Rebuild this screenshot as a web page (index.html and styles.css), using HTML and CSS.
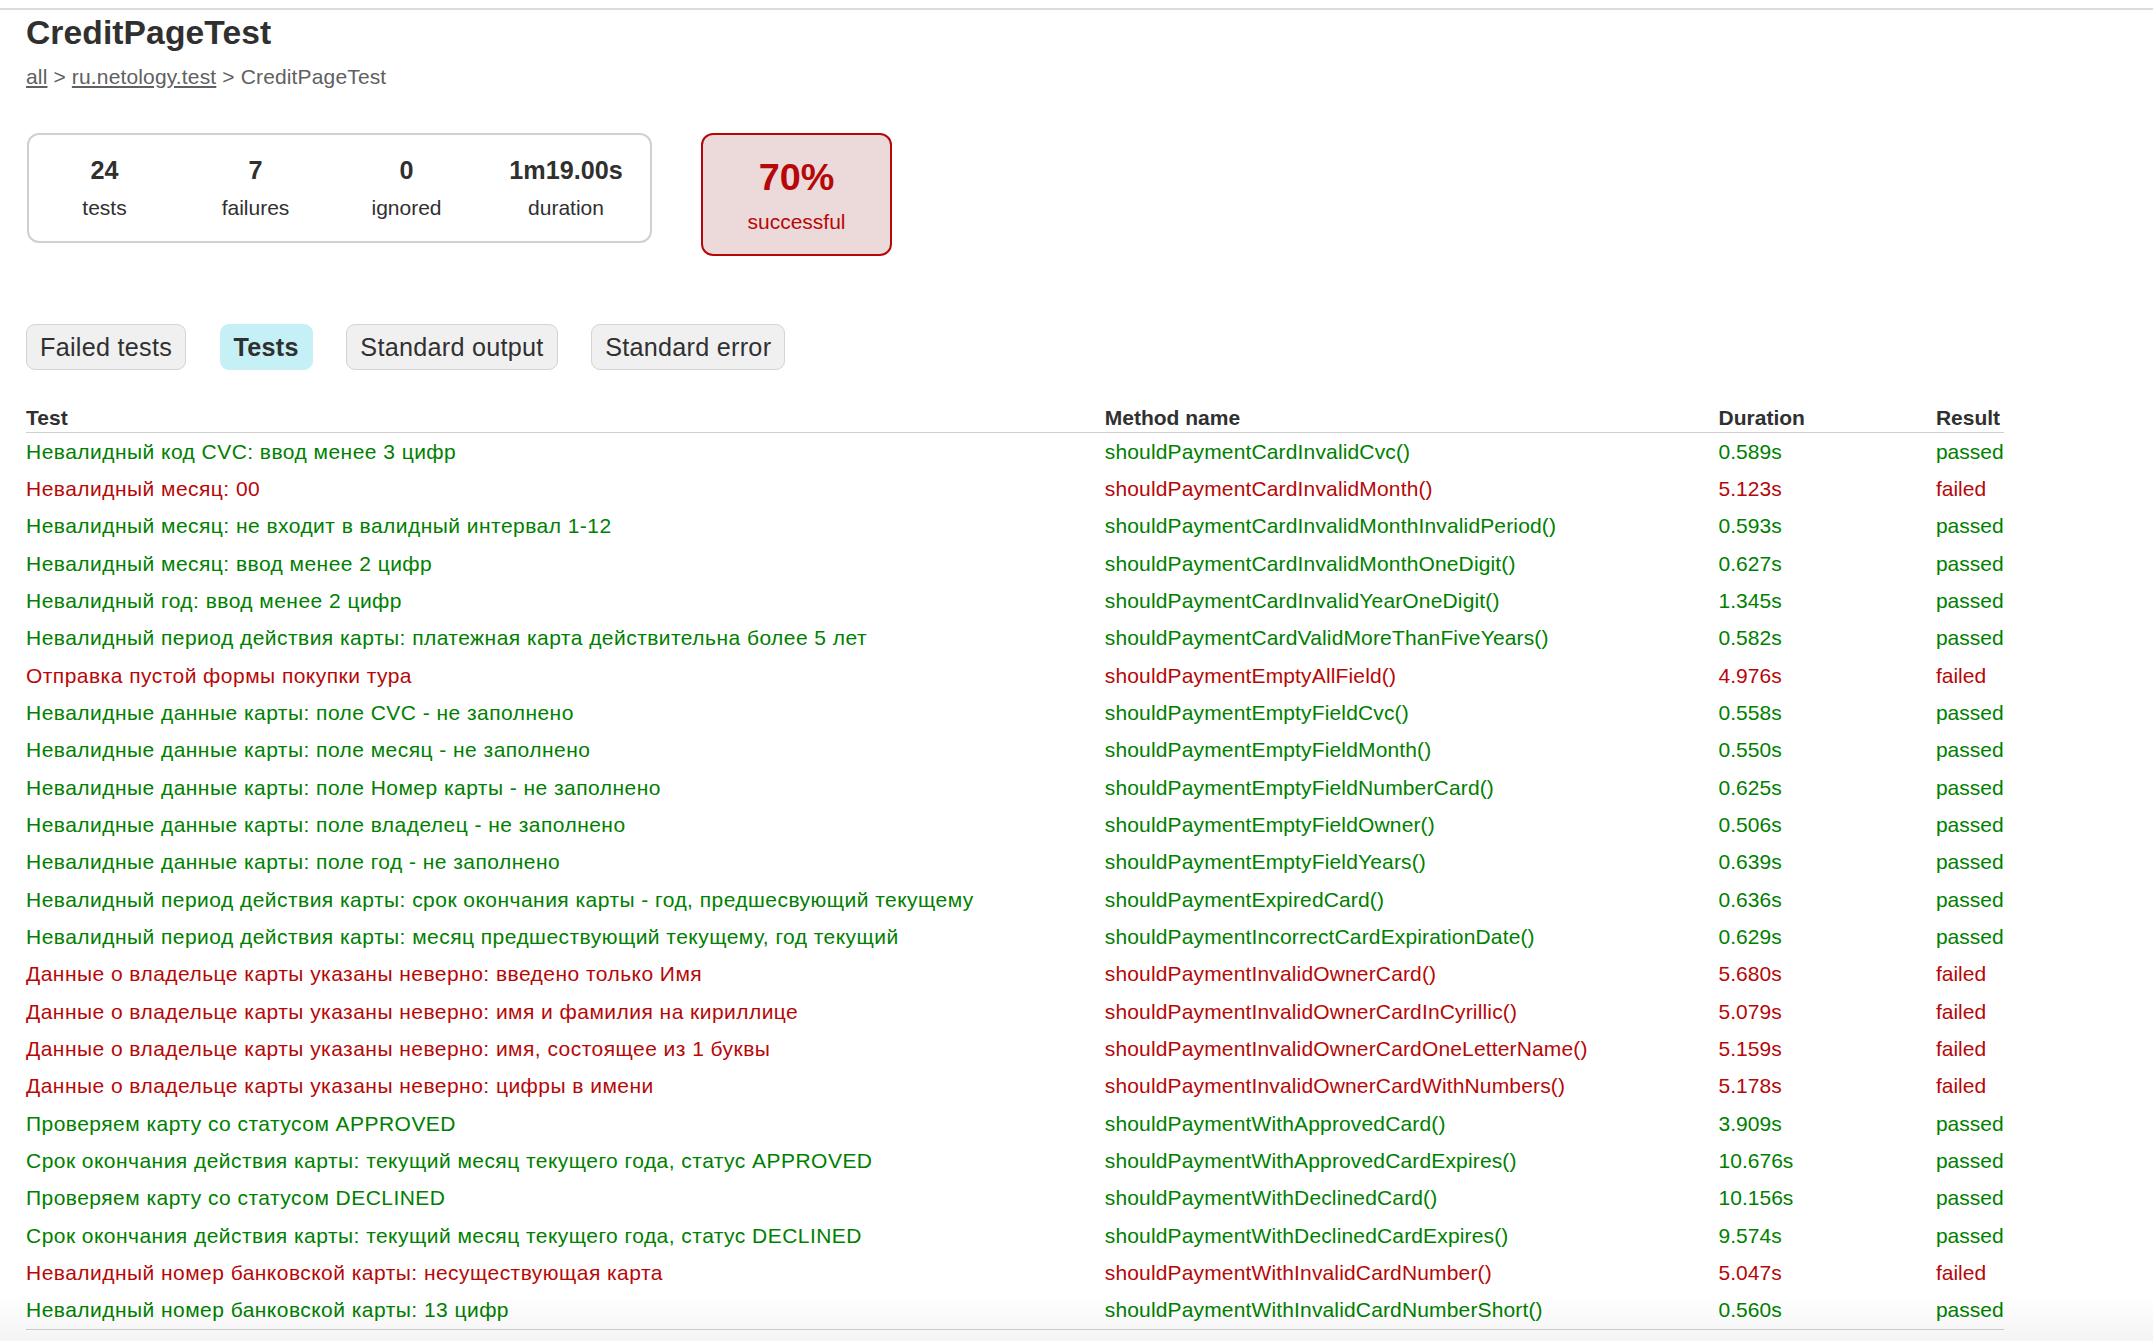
FILE: index.html
```html
<!DOCTYPE html>
<html lang="ru">
<head>
<meta charset="utf-8">
<title>Test results - CreditPageTest</title>
<link rel="stylesheet" href="styles.css">
</head>
<body>
<div class="topline"></div>
<div class="content">
  <h1 class="title">CreditPageTest</h1>
  <div class="breadcrumbs"><a href="#">all</a> &gt; <a href="#">ru.netology.test</a> &gt; CreditPageTest</div>

  <div class="summary">
    <div class="summary-group">
      <div class="info-box"><div class="counter">24</div><p>tests</p></div>
      <div class="info-box"><div class="counter">7</div><p>failures</p></div>
      <div class="info-box"><div class="counter">0</div><p>ignored</p></div>
      <div class="info-box info-duration"><div class="counter">1m19.00s</div><p>duration</p></div>
    </div>
    <div class="info-box success-rate failures">
      <div class="percent">70%</div>
      <p>successful</p>
    </div>
  </div>

  <ul class="tab-links">
    <li><a href="#">Failed tests</a></li>
    <li class="selected"><a href="#">Tests</a></li>
    <li><a href="#">Standard output</a></li>
    <li><a href="#">Standard error</a></li>
  </ul>

  <div class="tab">
    <table class="results">
      <thead>
        <tr><th>Test</th><th>Method name</th><th>Duration</th><th>Result</th></tr>
      </thead>
      <tbody>
        <tr class="ok"><td>Невалидный код CVC: ввод менее 3 цифр</td><td>shouldPaymentCardInvalidCvc()</td><td>0.589s</td><td>passed</td></tr>
        <tr class="bad"><td>Невалидный месяц: 00</td><td>shouldPaymentCardInvalidMonth()</td><td>5.123s</td><td>failed</td></tr>
        <tr class="ok"><td>Невалидный месяц: не входит в валидный интервал 1-12</td><td>shouldPaymentCardInvalidMonthInvalidPeriod()</td><td>0.593s</td><td>passed</td></tr>
        <tr class="ok"><td>Невалидный месяц: ввод менее 2 цифр</td><td>shouldPaymentCardInvalidMonthOneDigit()</td><td>0.627s</td><td>passed</td></tr>
        <tr class="ok"><td>Невалидный год: ввод менее 2 цифр</td><td>shouldPaymentCardInvalidYearOneDigit()</td><td>1.345s</td><td>passed</td></tr>
        <tr class="ok"><td>Невалидный период действия карты: платежная карта действительна более 5 лет</td><td>shouldPaymentCardValidMoreThanFiveYears()</td><td>0.582s</td><td>passed</td></tr>
        <tr class="bad"><td>Отправка пустой формы покупки тура</td><td>shouldPaymentEmptyAllField()</td><td>4.976s</td><td>failed</td></tr>
        <tr class="ok"><td>Невалидные данные карты: поле CVC - не заполнено</td><td>shouldPaymentEmptyFieldCvc()</td><td>0.558s</td><td>passed</td></tr>
        <tr class="ok"><td>Невалидные данные карты: поле месяц - не заполнено</td><td>shouldPaymentEmptyFieldMonth()</td><td>0.550s</td><td>passed</td></tr>
        <tr class="ok"><td>Невалидные данные карты: поле Номер карты - не заполнено</td><td>shouldPaymentEmptyFieldNumberCard()</td><td>0.625s</td><td>passed</td></tr>
        <tr class="ok"><td>Невалидные данные карты: поле владелец - не заполнено</td><td>shouldPaymentEmptyFieldOwner()</td><td>0.506s</td><td>passed</td></tr>
        <tr class="ok"><td>Невалидные данные карты: поле год - не заполнено</td><td>shouldPaymentEmptyFieldYears()</td><td>0.639s</td><td>passed</td></tr>
        <tr class="ok"><td>Невалидный период действия карты: срок окончания карты - год, предшесвующий текущему</td><td>shouldPaymentExpiredCard()</td><td>0.636s</td><td>passed</td></tr>
        <tr class="ok"><td>Невалидный период действия карты: месяц предшествующий текущему, год текущий</td><td>shouldPaymentIncorrectCardExpirationDate()</td><td>0.629s</td><td>passed</td></tr>
        <tr class="bad"><td>Данные о владельце карты указаны неверно: введено только Имя</td><td>shouldPaymentInvalidOwnerCard()</td><td>5.680s</td><td>failed</td></tr>
        <tr class="bad"><td>Данные о владельце карты указаны неверно: имя и фамилия на кириллице</td><td>shouldPaymentInvalidOwnerCardInCyrillic()</td><td>5.079s</td><td>failed</td></tr>
        <tr class="bad"><td>Данные о владельце карты указаны неверно: имя, состоящее из 1 буквы</td><td>shouldPaymentInvalidOwnerCardOneLetterName()</td><td>5.159s</td><td>failed</td></tr>
        <tr class="bad"><td>Данные о владельце карты указаны неверно: цифры в имени</td><td>shouldPaymentInvalidOwnerCardWithNumbers()</td><td>5.178s</td><td>failed</td></tr>
        <tr class="ok"><td>Проверяем карту со статусом APPROVED</td><td>shouldPaymentWithApprovedCard()</td><td>3.909s</td><td>passed</td></tr>
        <tr class="ok"><td>Срок окончания действия карты: текущий месяц текущего года, статус APPROVED</td><td>shouldPaymentWithApprovedCardExpires()</td><td>10.676s</td><td>passed</td></tr>
        <tr class="ok"><td>Проверяем карту со статусом DECLINED</td><td>shouldPaymentWithDeclinedCard()</td><td>10.156s</td><td>passed</td></tr>
        <tr class="ok"><td>Срок окончания действия карты: текущий месяц текущего года, статус DECLINED</td><td>shouldPaymentWithDeclinedCardExpires()</td><td>9.574s</td><td>passed</td></tr>
        <tr class="bad"><td>Невалидный номер банковской карты: несуществующая карта</td><td>shouldPaymentWithInvalidCardNumber()</td><td>5.047s</td><td>failed</td></tr>
        <tr class="ok"><td>Невалидный номер банковской карты: 13 цифр</td><td>shouldPaymentWithInvalidCardNumberShort()</td><td>0.560s</td><td>passed</td></tr>
      </tbody>
    </table>
  </div>
</div>
<div class="bottom-fade"></div>
</body>
</html>
```

FILE: styles.css
```css
html, body {
  margin: 0;
  padding: 0;
  background: #ffffff;
}

body {
  font-family: "Liberation Sans", Arial, Helvetica, sans-serif;
  font-size: 21px;
  color: #303030;
}

.topline {
  height: 2px;
  margin-top: 8px;
  background: #dcdcdc;
}

.content {
  padding-left: 26px;
}

.title {
  margin: 4px 0 13px;
  font-size: 33.6px;
  line-height: 38px;
  font-weight: bold;
  color: #303030;
  white-space: nowrap;
  letter-spacing: 0.1px;
}

.breadcrumbs {
  line-height: 24px;
  color: #606060;
  letter-spacing: 0.15px;
}

.breadcrumbs a {
  color: #606060;
  text-decoration: underline;
}

.summary {
  display: flex;
  align-items: flex-start;
  margin-top: 44px;
}

.summary-group {
  display: flex;
  border: 2px solid #d0d0d0;
  border-radius: 12px;
  margin-left: 1px;
}

.info-box {
  width: 151px;
  padding-top: 21px;
  padding-bottom: 21.5px;
  text-align: center;
}

.info-box p {
  margin: 0;
  line-height: 24px;
}

.info-duration {
  width: 168px;
}

.counter {
  font-size: 25.2px;
  line-height: 29px;
  font-weight: bold;
  margin-bottom: 10.5px;
}

.success-rate {
  width: 187px;
  margin-left: 49px;
  padding-top: 20px;
  padding-bottom: 20.5px;
  border: 2px solid #d0d0d0;
  border-radius: 12px;
}

.success-rate.failures {
  background: #ecdada;
  border-color: #b60808;
  color: #b60808;
}

.percent {
  font-size: 37.8px;
  line-height: 44px;
  font-weight: bold;
  margin-bottom: 10.5px;
}

.tab-links {
  display: flex;
  list-style: none;
  margin: 68px 0 0;
  padding: 0;
}

.tab-links li {
  padding: 7px 13px;
  margin-right: 33.5px;
  border: 1px solid #d4d4d4;
  border-radius: 9px;
  background: #f0f0f0;
}

.tab-links li.selected {
  background: #c5f0f5;
  border-color: #c5f0f5;
}

.tab-links a {
  display: block;
  font-size: 25.2px;
  line-height: 30px;
  color: #303030;
  text-decoration: none;
  white-space: nowrap;
  letter-spacing: 0.27px;
}

.tab-links li.selected a {
  font-weight: bold;
}

.tab {
  margin-top: 34.7px;
}

.results {
  border-collapse: collapse;
  border-bottom: 1px solid #d0d0d0;
}

.results th {
  text-align: left;
  white-space: nowrap;
  font-weight: bold;
  line-height: 24px;
  padding: 1px 0 2px 131px;
  border-bottom: 1px solid #d0d0d0;
  color: #303030;
}

.results td {
  white-space: nowrap;
  line-height: 23.33px;
  padding: 7px 0 7px 131px;
}

.results th:first-child,
.results td:first-child {
  padding-left: 0;
}

.results td:first-child {
  letter-spacing: 0.46px;
}

.results td:nth-child(2) {
  letter-spacing: 0.15px;
}

.results tr.ok td {
  color: #008000;
}

.results tr.bad td {
  color: #b60808;
}

.bottom-fade {
  position: fixed;
  left: 0;
  right: 0;
  bottom: 0;
  height: 44px;
  background: linear-gradient(to bottom, rgba(0, 0, 0, 0), rgba(0, 0, 0, 0.045));
  pointer-events: none;
}
```
